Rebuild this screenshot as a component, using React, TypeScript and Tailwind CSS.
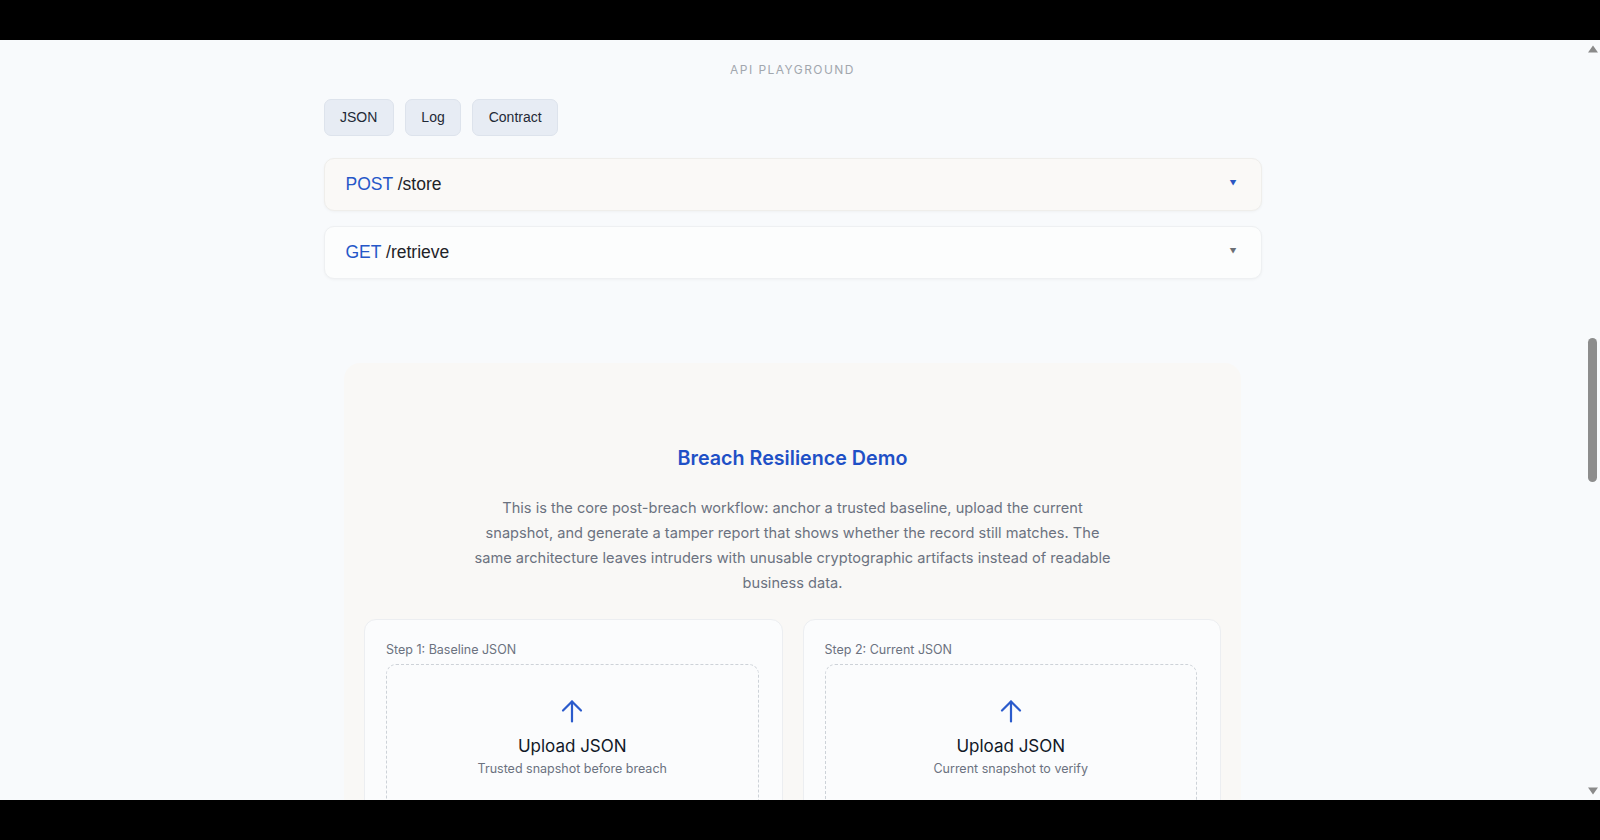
import React from "react";

function ArrowUp() {
  return (
    <svg width="22" height="24" viewBox="0 0 22 24" fill="none" stroke="#2b5bcc" strokeWidth="2.2" strokeLinecap="round" strokeLinejoin="round">
      <path d="M2 11.5 11 2.5 20 11.5" />
      <path d="M11 2.5V22.5" />
    </svg>
  );
}

function Endpoint({ method, path, tint }: { method: string; path: string; tint: boolean }) {
  return (
    <div
      className={`flex h-[53px] items-center justify-between rounded-[10px] border pl-[21px] pr-[24px] shadow-[0_1px_3px_rgba(0,0,0,0.04)] ${
        tint ? "border-[#efeeeb] bg-[#faf9f7]" : "border-[#eef0f2] bg-[#fcfdfd]"
      }`}
    >
      <div className="text-[17.5px] text-[#1f2328] [font-family:'Liberation_Sans',Arial,sans-serif]">
        <span className="text-[#2557c8]">{method}</span> {path}
      </div>
      <span className={`text-[7px] ${tint ? "text-[#2a56c2]" : "text-[#6b6f75]"}`}>▼</span>
    </div>
  );
}

function StepCard({ label, sub }: { label: string; sub: string }) {
  return (
    <div className="rounded-xl border border-[#eceef1] bg-[#fbfcfd] pl-[21px] pr-[23px] pt-[21px]">
      <div className="text-[12.5px] leading-[18px] text-[#6b7280]">{label}</div>
      <div className="mt-[5px] flex flex-col items-center rounded-[10px] border border-dashed border-[#cdd2d8] pb-[40px] pt-[34px]">
        <ArrowUp />
        <div className="mt-[11px] text-[17px] font-normal leading-[24px] text-[#111827]">Upload JSON</div>
        <div className="mt-[2px] text-[12.5px] leading-[18px] text-[#6b7280]">{sub}</div>
      </div>
    </div>
  );
}

function Scrollbar() {
  return (
    <div className="flex w-[15px] shrink-0 flex-col items-center bg-[#f8fafc] pb-[5px] pt-[5px]">
      <svg width="10" height="8" viewBox="0 0 10 8">
        <polygon points="5,0.5 10,7.5 0,7.5" fill="#8a8a8a" />
      </svg>
      <div className="mt-[285px] h-[144px] w-[9px] rounded-full bg-[#8d8d8d]" />
      <div className="flex-1" />
      <svg width="10" height="8" viewBox="0 0 10 8">
        <polygon points="0,0.5 10,0.5 5,7.5" fill="#8a8a8a" />
      </svg>
    </div>
  );
}

export default function App() {
  return (
    <div className="flex h-[840px] w-[1600px] flex-col bg-black [font-family:Inter,'Noto_Sans',sans-serif]">
      <div className="h-[40px] shrink-0 bg-black" />
      <div className="flex h-[760px] shrink-0 bg-[#f8fafc]">
        <main className="min-w-0 flex-1 overflow-hidden pt-[22px]">
          <section className="mx-auto w-[938px]">
            <div className="text-center text-[12px] font-normal leading-[16px] tracking-[0.12em] text-[#a2a7ae]">
              API PLAYGROUND
            </div>
            <div className="mt-[21px] flex gap-[11px] [font-family:'Liberation_Sans',Arial,sans-serif]">
              {["JSON", "Log", "Contract"].map((t) => (
                <button
                  key={t}
                  className="h-[37px] rounded-[7px] border border-[#dde3ec] bg-[#e7ecf4] px-[15.5px] text-[14px] text-[#1f2937]"
                >
                  {t}
                </button>
              ))}
            </div>
            <div className="mt-[22px] flex flex-col gap-[15px]">
              <Endpoint method="POST" path="/store" tint />
              <Endpoint method="GET" path="/retrieve" tint={false} />
            </div>
          </section>

          <section className="mx-auto mt-[84px] w-[897px] rounded-2xl bg-[#f9f8f6] px-[20px] pb-[60px] pt-[81px]">
            <h2 className="text-center text-[19.7px] font-semibold leading-[28px] text-[#1f50c6]">
              Breach Resilience Demo
            </h2>
            <p className="mx-auto mt-[24px] max-w-[640px] text-center text-[14.6px] leading-[25px] text-[#6b7280]">
              This is the core post-breach workflow: anchor a trusted baseline, upload the current snapshot, and
              generate a tamper report that shows whether the record still matches. The same architecture leaves
              intruders with unusable cryptographic artifacts instead of readable business data.
            </p>
            <div className="mt-[23px] grid grid-cols-2 gap-[20px]">
              <StepCard label="Step 1: Baseline JSON" sub="Trusted snapshot before breach" />
              <StepCard label="Step 2: Current JSON" sub="Current snapshot to verify" />
            </div>
          </section>
        </main>
        <Scrollbar />
      </div>
      <div className="h-[40px] shrink-0 bg-black" />
    </div>
  );
}
